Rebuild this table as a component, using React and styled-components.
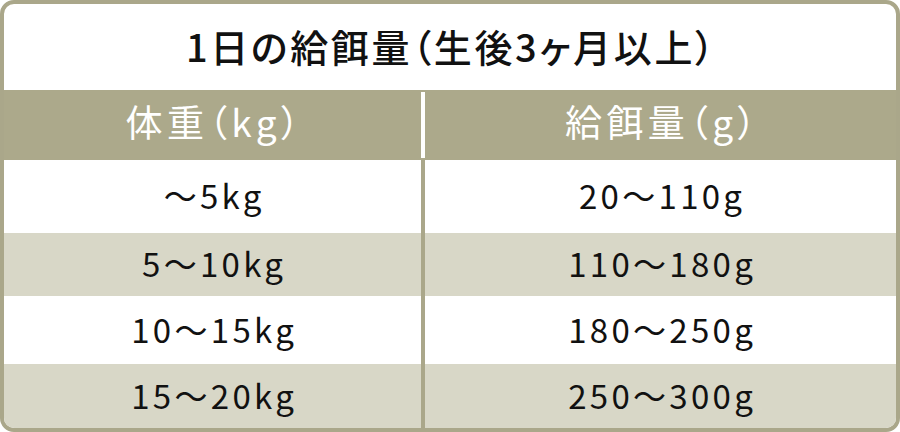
import React from 'react';
import styled, { createGlobalStyle } from 'styled-components';

const GlobalStyle = createGlobalStyle`
  html, body {
    margin: 0;
    padding: 0;
    background: #ffffff;
  }
  body {
    font-family: "Noto Sans CJK JP", "Noto Sans", sans-serif;
  }
`;

const colors = {
  border: '#aaa78a',
  head: '#aca98b',
  stripe: '#d8d7c7',
  text: '#111111'
};

const Frame = styled.div`
  box-sizing: border-box;
  width: 900px;
  height: 432px;
  border: 4px solid ${colors.border};
  border-radius: 14px;
  overflow: hidden;
  background: #fff;
  display: flex;
  flex-direction: column;
`;

const Title = styled.h2`
  margin: 0;
  height: 86px;
  padding: 0 0 4px 0.07em;
  box-sizing: border-box;
  display: flex;
  align-items: center;
  justify-content: center;
  font-size: 38px;
  font-weight: 500;
  font-feature-settings: "palt";
  letter-spacing: 0.07em;
  color: ${colors.text};
`;

const Grid = styled.div`
  flex: 1;
  display: grid;
  grid-template-columns: 417px 4px 1fr;
  grid-template-rows: 70px 73px 63px 68px 1fr;
`;

const Cell = styled.div`
  display: flex;
  align-items: center;
  justify-content: center;
  padding: ${props => (props.head ? '0 0 8px 0.12em' : '0 0 3px 0.1em')};
  font-size: ${props => (props.head ? '37px' : '33px')};
  font-feature-settings: "palt";
  letter-spacing: ${props => (props.head ? '0.12em' : '0.1em')};
  color: ${props => (props.head ? '#ffffff' : colors.text)};
  background: ${props => (props.head ? colors.head : props.striped ? colors.stripe : '#ffffff')};
`;

const Divider = styled.div`
  background: ${props => (props.head ? colors.head : colors.border)};
  padding: ${props => (props.head ? '2px 0' : '0')};
  box-sizing: border-box;

  &::after {
    content: '';
    display: ${props => (props.head ? 'block' : 'none')};
    height: 100%;
    background: #ffffff;
  }
`;

const rows = [
  ['〜5kg', '20〜110g'],
  ['5〜10kg', '110〜180g'],
  ['10〜15kg', '180〜250g'],
  ['15〜20kg', '250〜300g']
];

export default function App() {
  return (
    <>
      <GlobalStyle />
      <Frame>
        <Title>1日の給餌量（生後3ヶ月以上）</Title>
        <Grid>
          <Cell head>体重（kg）</Cell>
          <Divider head />
          <Cell head>給餌量（g）</Cell>
          {rows.map(([weight, amount], i) => (
            <React.Fragment key={weight}>
              <Cell striped={i % 2 === 1}>{weight}</Cell>
              <Divider />
              <Cell striped={i % 2 === 1}>{amount}</Cell>
            </React.Fragment>
          ))}
        </Grid>
      </Frame>
    </>
  );
}
